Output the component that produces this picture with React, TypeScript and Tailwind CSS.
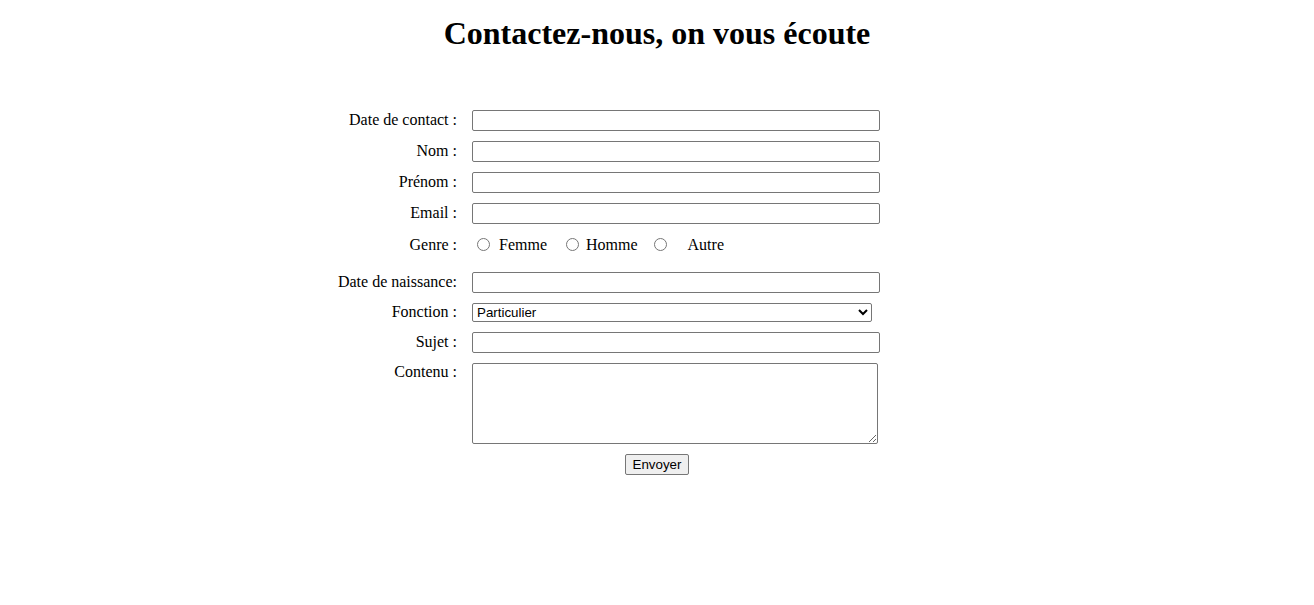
import React from 'react'

const inputCls = 'w-[408px] h-[21px] border border-[#767676] rounded-[2px] bg-white px-[2px] outline-none'

function Row({ label, children, top }: { label: string; children: React.ReactNode; top?: boolean }) {
  return (
    <div className={`flex ${top ? 'items-start' : 'items-center'}`}>
      <div
        className={`w-[136px] pr-[15px] text-right whitespace-nowrap ${top ? 'leading-[18px]' : 'leading-[16px] pb-[2px]'}`}
      >
        {label}
      </div>
      {children}
    </div>
  )
}

export default function App() {
  return (
    <div className="min-h-[605px] bg-white text-black font-['Liberation_Serif',serif] text-[16px]">
      <h1 className="pt-[14.5px] text-center text-[32px] font-bold leading-[37px]">
        Contactez-nous, on vous écoute
      </h1>

      <form className="pt-[58.5px] flex flex-col" onSubmit={(e) => e.preventDefault()}>
        <div className="pl-[336px] flex flex-col gap-[10px]">
          <Row label="Date de contact :">
            <input type="text" className={inputCls} />
          </Row>
          <Row label="Nom :">
            <input type="text" className={inputCls} />
          </Row>
          <Row label="Prénom :">
            <input type="text" className={inputCls} />
          </Row>
          <Row label="Email :">
            <input type="text" className={inputCls} />
          </Row>
          <div className="flex items-center h-[21px] mb-[7px]">
            <div className="w-[136px] pr-[15px] text-right leading-[18px]">Genre :</div>
            <div className="flex items-center">
              <input type="radio" name="genre" className="ml-[5px] w-[13px] h-[13px]" />
              <span className="ml-[9px]">Femme</span>
              <input type="radio" name="genre" className="ml-[19px] w-[13px] h-[13px]" />
              <span className="ml-[7px]">Homme</span>
              <input type="radio" name="genre" className="ml-[16px] w-[13px] h-[13px]" />
              <span className="ml-[21px]">Autre</span>
            </div>
          </div>
          <Row label="Date de naissance:">
            <input type="text" className={inputCls} />
          </Row>
          <Row label="Fonction :">
            <select
              defaultValue="Particulier"
              className="w-[400px] h-[19px] border border-[#767676] rounded-[2px] bg-white font-['Liberation_Sans',sans-serif] text-[13.33px]"
            >
              <option>Particulier</option>
              <option>Professionnel</option>
            </select>
          </Row>
          <Row label="Sujet :">
            <input type="text" className={inputCls} />
          </Row>
          <Row label="Contenu :" top>
            <textarea className="w-[406px] h-[81px] border border-[#767676] rounded-[2px] bg-white outline-none" />
          </Row>
        </div>
        <div className="flex justify-center mt-[10px]">
          <button
            type="submit"
            className="h-[21px] px-[7px] border border-[#767676] rounded-[2px] bg-[#efefef] font-['Liberation_Sans',sans-serif] text-[13.33px] leading-none"
          >
            Envoyer
          </button>
        </div>
      </form>
    </div>
  )
}
